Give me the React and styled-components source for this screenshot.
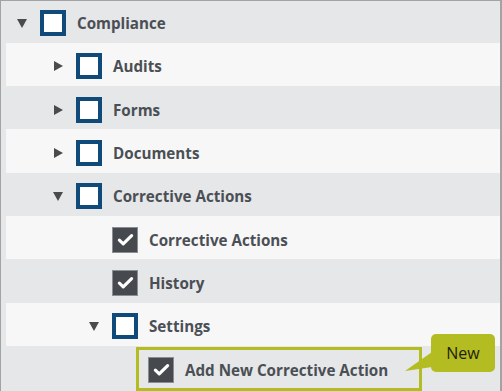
import React from "react";
import styled, { createGlobalStyle } from "styled-components";

const GlobalStyle = createGlobalStyle`
    * {
        box-sizing: border-box;
    }
    body {
        margin: 0;
        background: #ffffff;
        font-family: "Open Sans", "Liberation Sans", sans-serif;
    }
`;

const items = [
    { label: "Compliance", level: 0, toggle: "open", checked: false },
    { label: "Audits", level: 1, toggle: "closed", checked: false },
    { label: "Forms", level: 1, toggle: "closed", checked: false },
    { label: "Documents", level: 1, toggle: "closed", checked: false },
    { label: "Corrective Actions", level: 1, toggle: "open", checked: false },
    { label: "Corrective Actions", level: 2, toggle: null, checked: true },
    { label: "History", level: 2, toggle: null, checked: true },
    { label: "Settings", level: 2, toggle: "open", checked: false },
    { label: "Add New Corrective Action", level: 3, toggle: null, checked: true },
];

const App = () => {
    return (
        <>
            <GlobalStyle />
            <Frame>
                <Tree>
                    {items.map((item, i) => (
                        <Row key={i} $light={i % 2 === 1}>
                            <Indent $level={item.level} />
                            <ToggleSlot>
                                {item.toggle && <Caret $open={item.toggle === "open"} />}
                            </ToggleSlot>
                            <CheckBox checked={item.checked} />
                            <Label>{item.label}</Label>
                        </Row>
                    ))}
                </Tree>
                <Highlight />
                <Callout>
                    <CalloutTail viewBox="0 0 27 20" width="27" height="20">
                        <polygon points="27,0 0,19 27,15" fill="#b3bc20" />
                    </CalloutTail>
                    New
                </Callout>
            </Frame>
        </>
    );
};

export default App;

const CheckBox = ({ checked }) => {
    if (!checked) return <EmptyBox />;
    return (
        <FilledBox>
            <svg viewBox="0 0 24 24" width="21" height="21">
                <path
                    d="M5 12.8l4.4 4.2L19 7.6"
                    fill="none"
                    stroke="#ffffff"
                    strokeWidth="3.6"
                    strokeLinecap="round"
                    strokeLinejoin="round"
                />
            </svg>
        </FilledBox>
    );
};

const Frame = styled.div`
    position: relative;
    width: 502px;
    height: 391px;
    overflow: hidden;
    background: #e6e7e8;
    border-top: 1px solid #a3a3a3;
    border-left: 1px solid #a3a3a3;
    border-right: 2px solid #a3a3a3;
`;

const Tree = styled.div`
    display: flex;
    flex-direction: column;
    margin-top: -1.7px;
`;

const Row = styled.div`
    display: flex;
    align-items: center;
    height: 43.33px;
    padding-top: 4px;
    margin-left: ${(p) => (p.$light ? "5px" : "0")};
    padding-left: ${(p) => (p.$light ? "11px" : "16px")};
    background: ${(p) => (p.$light ? "#f7f7f7" : "#e6e7e8")};
`;

const Indent = styled.span`
    flex: none;
    width: ${(p) => p.$level * 36}px;
`;

const ToggleSlot = styled.span`
    flex: none;
    width: 23px;
    display: flex;
    align-items: center;
`;

const Caret = styled.span`
    width: 0;
    height: 0;
    ${(p) =>
        p.$open
            ? `
        margin-left: 0;
        margin-top: 1px;
        border-left: 5px solid transparent;
        border-right: 5px solid transparent;
        border-top: 9px solid #4a4b4d;
    `
            : `
        margin-left: 1px;
        margin-top: 0;
        border-top: 5px solid transparent;
        border-bottom: 5px solid transparent;
        border-left: 9px solid #4a4b4d;
    `}
`;

const EmptyBox = styled.span`
    flex: none;
    width: 26px;
    height: 26px;
    background: #ffffff;
    border: 4px solid #0f4a7a;
    margin-top: 0;
`;

const FilledBox = styled.span`
    flex: none;
    width: 26px;
    height: 26px;
    display: flex;
    align-items: center;
    justify-content: center;
    background: #46494e;
    border: 1px solid #8a8d91;
    margin-top: 0;
`;

const Label = styled.span`
    margin-left: 11px;
    margin-top: 0;
    font-size: 15.2px;
    font-weight: 700;
    color: #4a4f55;
    white-space: nowrap;
`;

const Highlight = styled.div`
    position: absolute;
    left: 135px;
    top: 346px;
    width: 286px;
    height: 44px;
    border: 3px solid #b3bc20;
    pointer-events: none;
`;

const Callout = styled.div`
    position: absolute;
    left: 430px;
    top: 333px;
    width: 64px;
    height: 38px;
    display: flex;
    align-items: center;
    justify-content: center;
    background: #b3bc20;
    border-radius: 5px;
    font-size: 16px;
    font-weight: 400;
    color: #1f2210;
`;

const CalloutTail = styled.svg`
    position: absolute;
    left: -26px;
    top: 18px;
`;
